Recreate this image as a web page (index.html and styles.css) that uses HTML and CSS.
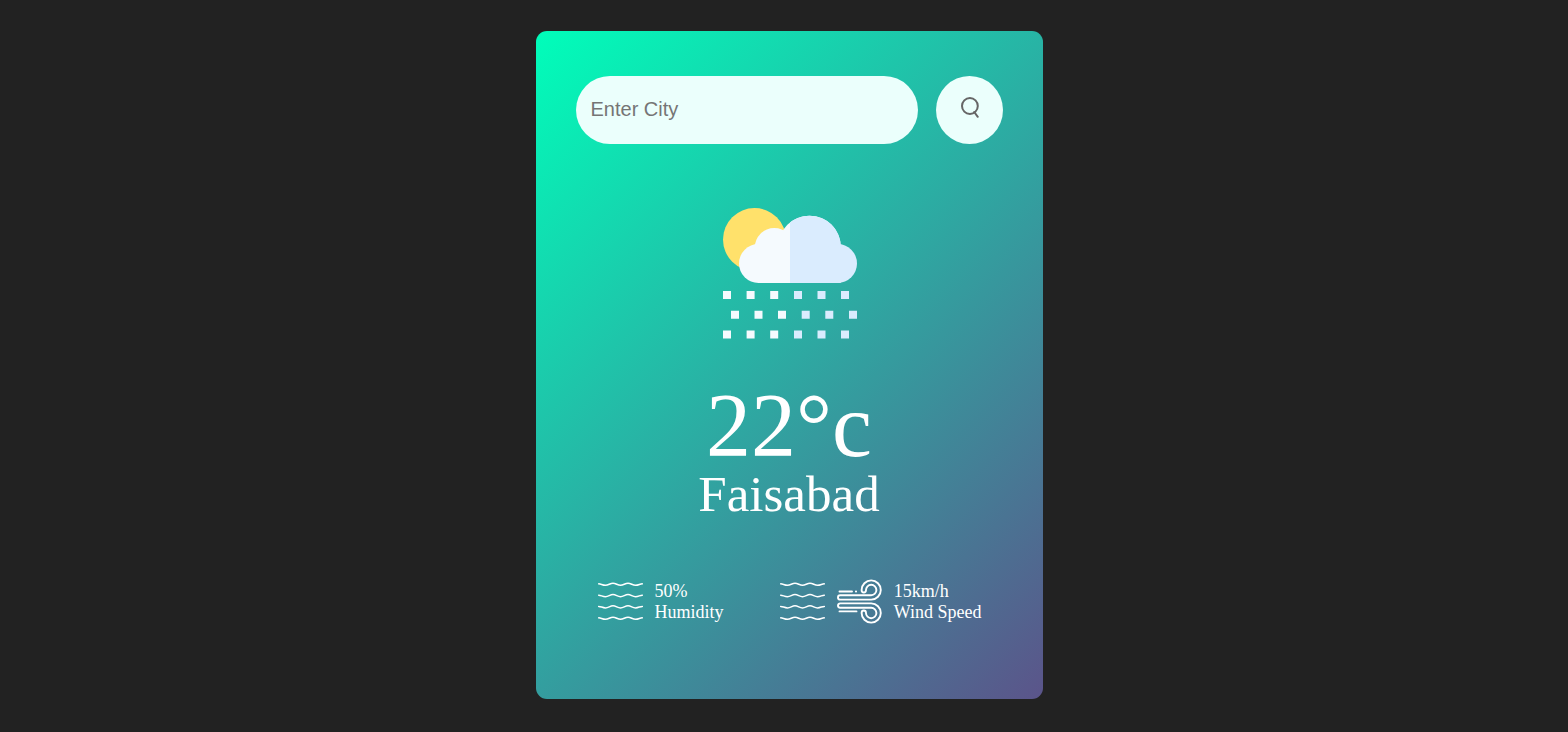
FILE: index.html
```html
<!DOCTYPE html>
<html lang="en">
<head>
<meta charset="utf-8">
<meta name="viewport" content="width=device-width, initial-scale=1">
<title>Weather App</title>
<link rel="stylesheet" href="styles.css">
</head>
<body>
<svg class="defs" width="0" height="0" aria-hidden="true">
  <symbol id="waves" viewBox="0 0 45 45">
    <g fill="none" stroke="#fff" stroke-width="1.5" stroke-linecap="round">
      <path d="M.7 4.8C3 4.8 4.500 6.300 7.500 6.300S12 4.200 15 4.200s4.500 2.100 7.500 2.100S27 4.200 30 4.200s4.500 2.100 7.500 2.100S42 4.800 44.300 4.800"/>
      <path d="M.7 16.200C3 16.200 4.500 17.700 7.500 17.700S12 15.600 15 15.600s4.500 2.100 7.500 2.100S27 15.600 30 15.600s4.500 2.100 7.500 2.100S42 16.200 44.300 16.200"/>
      <path d="M.7 27.400C3 27.400 4.500 28.900 7.500 28.900S12 26.800 15 26.800s4.500 2.100 7.500 2.100S27 26.800 30 26.800s4.500 2.100 7.500 2.100S42 27.400 44.300 27.400"/>
      <path d="M.7 38.800C3 38.800 4.500 40.300 7.500 40.300S12 38.200 15 38.200s4.500 2.100 7.500 2.100S27 38.200 30 38.200s4.500 2.100 7.500 2.100S42 38.800 44.300 38.800"/>
    </g>
  </symbol>
</svg>
<main class="card">
  <form class="search">
    <input class="search-input" type="text" placeholder="Enter City" aria-label="City" spellcheck="false">
    <button class="search-button" type="button" aria-label="Search">
      <svg class="search-icon" viewBox="0 0 22 24" fill="none" stroke="#666" stroke-width="2">
        <circle cx="11.900" cy="10" r="7.900"/>
        <path d="M16.200 16l3.600 4.800" stroke-linecap="round"/>
      </svg>
    </button>
  </form>
  <section class="weather">
    <svg class="weather-icon" viewBox="-1 0 135 134" role="img" aria-label="Rain with sun">
      <circle cx="31.500" cy="31.500" r="31.500" fill="#ffe16b"/>
      <g fill="#f5fafe">
        <circle cx="35.500" cy="55.500" r="19.500"/>
        <circle cx="51.300" cy="39.500" r="19.500"/>
        <circle cx="86.500" cy="39" r="31.300"/>
        <path d="M35.500 39.500H68V75H35.500z"/>
      </g>
      <g fill="#daecfe">
        <path d="M67 14.500A31.300 31.300 0 0 1 117.800 39V75H67z"/>
        <circle cx="114.500" cy="55.500" r="19.500"/>
      </g>
      <path fill="#f5fafe" d="M0 83h8v8H0zM23.600 83h8v8h-8zM47.200 83h8v8h-8zM8 102.800h8v8H8zM31.500 102.800h8v8h-8zM55 102.800h8v8h-8zM0 122.500h8v8H0zM23.600 122.500h8v8h-8zM47.200 122.500h8v8h-8z"/>
      <path fill="#daecfe" d="M71 83h8v8h-8zM94.500 83h8v8h-8zM118 83h8v8h-8zM78.700 102.800h8v8h-8zM102.300 102.800h8v8h-8zM126 102.800h8v8h-8zM71 122.500h8v8h-8zM94.500 122.500h8v8h-8zM118 122.500h8v8h-8z"/>
    </svg>
    <h1 class="temp">22°c</h1>
    <h2 class="city">Faisabad</h2>
  </section>
  <section class="details">
    <div class="col">
      <svg class="detail-icon" aria-hidden="true"><use href="#waves"/></svg>
      <div><p>50%</p><p>Humidity</p></div>
    </div>
    <div class="col">
      <svg class="detail-icon" aria-hidden="true"><use href="#waves"/></svg>
      <svg class="detail-icon" viewBox="0 0 45 45" fill="none" stroke="#fff" stroke-width="1.900" stroke-linecap="round" stroke-linejoin="round" aria-hidden="true">
        <path d="M3.200 16.200H34.200A5.200 5.200 0 1 0 29 11C29 14.300 24.600 14.300 24.600 11A9.600 9.600 0 1 1 34.200 20.600H3.200a2.200 2.200 0 0 1 0-4.400z"/>
        <path d="M3.200 28.800H34.200A5.200 5.200 0 1 1 29 34C29 30.700 24.600 30.700 24.600 34A9.600 9.600 0 1 0 34.200 24.400H3.200a2.200 2.200 0 0 0 0 4.400z"/>
        <path d="M2.500 12.500H15M18.900 12.500h.2M2.500 32.400H19.500"/>
      </svg>
      <div><p>15km/h</p><p>Wind Speed</p></div>
    </div>
  </section>
</main>
</body>
</html>
```
FILE: styles.css
```css
* {
  margin: 0;
  padding: 0;
  box-sizing: border-box;
}

body {
  min-height: 100vh;
  padding: 31px 16px 31px 26px;
  background: #222;
  font-family: "Liberation Serif", "Times New Roman", serif;
}

.defs {
  position: absolute;
}

.card {
  width: 100%;
  max-width: 507px;
  margin: 0 auto;
  padding: 45px 40px 75px;
  border-radius: 11px;
  background: linear-gradient(135deg, #00feba, #5b548a);
  color: #fff;
  text-align: center;
}

.search {
  display: flex;
  gap: 18px;
}

.search-input {
  flex: 1;
  min-width: 0;
  height: 68px;
  padding: 0 15px 2px;
  border: 0;
  border-radius: 34px;
  outline: 0;
  background: #ebfffc;
  color: #555;
  font: 20px "Liberation Sans", Arial, sans-serif;
}

.search-input::placeholder {
  color: #757575;
}

.search-button {
  display: flex;
  justify-content: center;
  align-items: center;
  width: 67px;
  height: 68px;
  padding-bottom: 4px;
  border: 0;
  border-radius: 50%;
  background: #ebfffc;
  cursor: pointer;
}

.search-icon {
  width: 22px;
  height: 24px;
}

.weather-icon {
  display: block;
  width: 135px;
  height: 134px;
  margin: 64px auto 38px;
}

.temp {
  font-size: 90px;
  font-weight: 500;
  line-height: 92px;
}

.city {
  font-size: 51px;
  font-weight: 500;
  line-height: 44px;
}

.details {
  display: flex;
  justify-content: space-between;
  align-items: center;
  margin-top: 63px;
  padding: 0 21px 0 22px;
}

.col {
  display: flex;
  align-items: center;
  gap: 12px;
  text-align: left;
  font-size: 18px;
  line-height: 21px;
}

.detail-icon {
  flex: none;
  width: 45px;
  height: 45px;
}
```
